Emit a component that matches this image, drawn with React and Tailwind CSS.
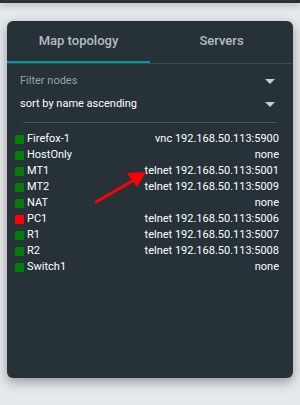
import React from 'react';

const nodes = [
  { name: 'Firefox-1', console: 'vnc 192.168.50.113:5900', on: true },
  { name: 'HostOnly', console: 'none', on: true },
  { name: 'MT1', console: 'telnet 192.168.50.113:5001', on: true },
  { name: 'MT2', console: 'telnet 192.168.50.113:5009', on: true },
  { name: 'NAT', console: 'none', on: true },
  { name: 'PC1', console: 'telnet 192.168.50.113:5006', on: false },
  { name: 'R1', console: 'telnet 192.168.50.113:5007', on: true },
  { name: 'R2', console: 'telnet 192.168.50.113:5008', on: true },
  { name: 'Switch1', console: 'none', on: true },
];

const Caret = () => (
  <svg width="10" height="5" viewBox="0 0 10 5" className="fill-[#c8cccf]">
    <path d="M0 0 L10 0 L5 5 Z" />
  </svg>
);

const App = () => {
  return (
    <div className="relative w-[300px] h-[405px] bg-[#e6e9ec] overflow-hidden" style={{ fontFamily: 'Roboto, "Liberation Sans", sans-serif' }}>
      <div className="h-[3px] bg-[#263238] shadow-[0_2px_6px_rgba(0,0,0,0.35)]"></div>
      <div className="ml-[7px] mt-[18px] w-[286px] h-[357px] bg-[#263238] rounded-[6px] shadow-[0_4px_12px_rgba(0,0,0,0.35)] flex flex-col">
        {/* tabs */}
        <div className="flex border-b border-[#3d484e]">
          <div className="flex-1 h-[42px] flex items-center justify-center text-[13px] font-medium text-[#b7bcbf] border-b-2 border-[#0097a7]">
            Map topology
          </div>
          <div className="flex-1 h-[42px] flex items-center justify-center text-[13px] font-medium text-[#b7bcbf] border-b-2 border-transparent">
            Servers
          </div>
        </div>

        <div className="pl-[13px] pr-[13px]">
          <div className="flex items-center justify-between h-[24px] mt-[5px] pr-[5px]">
            <span className="text-[11px] text-[#9aa1a5]">Filter nodes</span>
            <Caret />
          </div>
          <div className="flex items-center justify-between h-[24px] pr-[5px] mt-[-1px]">
            <span className="text-[11px] text-white">sort by name ascending</span>
            <Caret />
          </div>
          <div className="mt-[6px] mx-[3px] border-t border-[#4a555b]"></div>
        </div>

        <ul className="mt-[8px] pl-[8px] pr-[14px]">
          {nodes.map((n) => (
            <li key={n.name} className="flex items-center h-[16px] text-[11px] text-white">
              <span className={`w-[9px] h-[9px] mr-[3px] ${n.on ? 'bg-[#008000]' : 'bg-[#ff0000]'}`}></span>
              <span>{n.name}</span>
              <span className="ml-auto">{n.console}</span>
            </li>
          ))}
        </ul>
      </div>

      {/* annotation arrow */}
      <svg className="absolute left-0 top-0 pointer-events-none" width="300" height="405">
        <line x1="96" y1="202" x2="134" y2="180" stroke="#ff0000" strokeWidth="3" strokeLinecap="round" />
        <path d="M127 173 L146 172 L137 187 Z" fill="#ff0000" />
      </svg>
    </div>
  );
};

export default App;
